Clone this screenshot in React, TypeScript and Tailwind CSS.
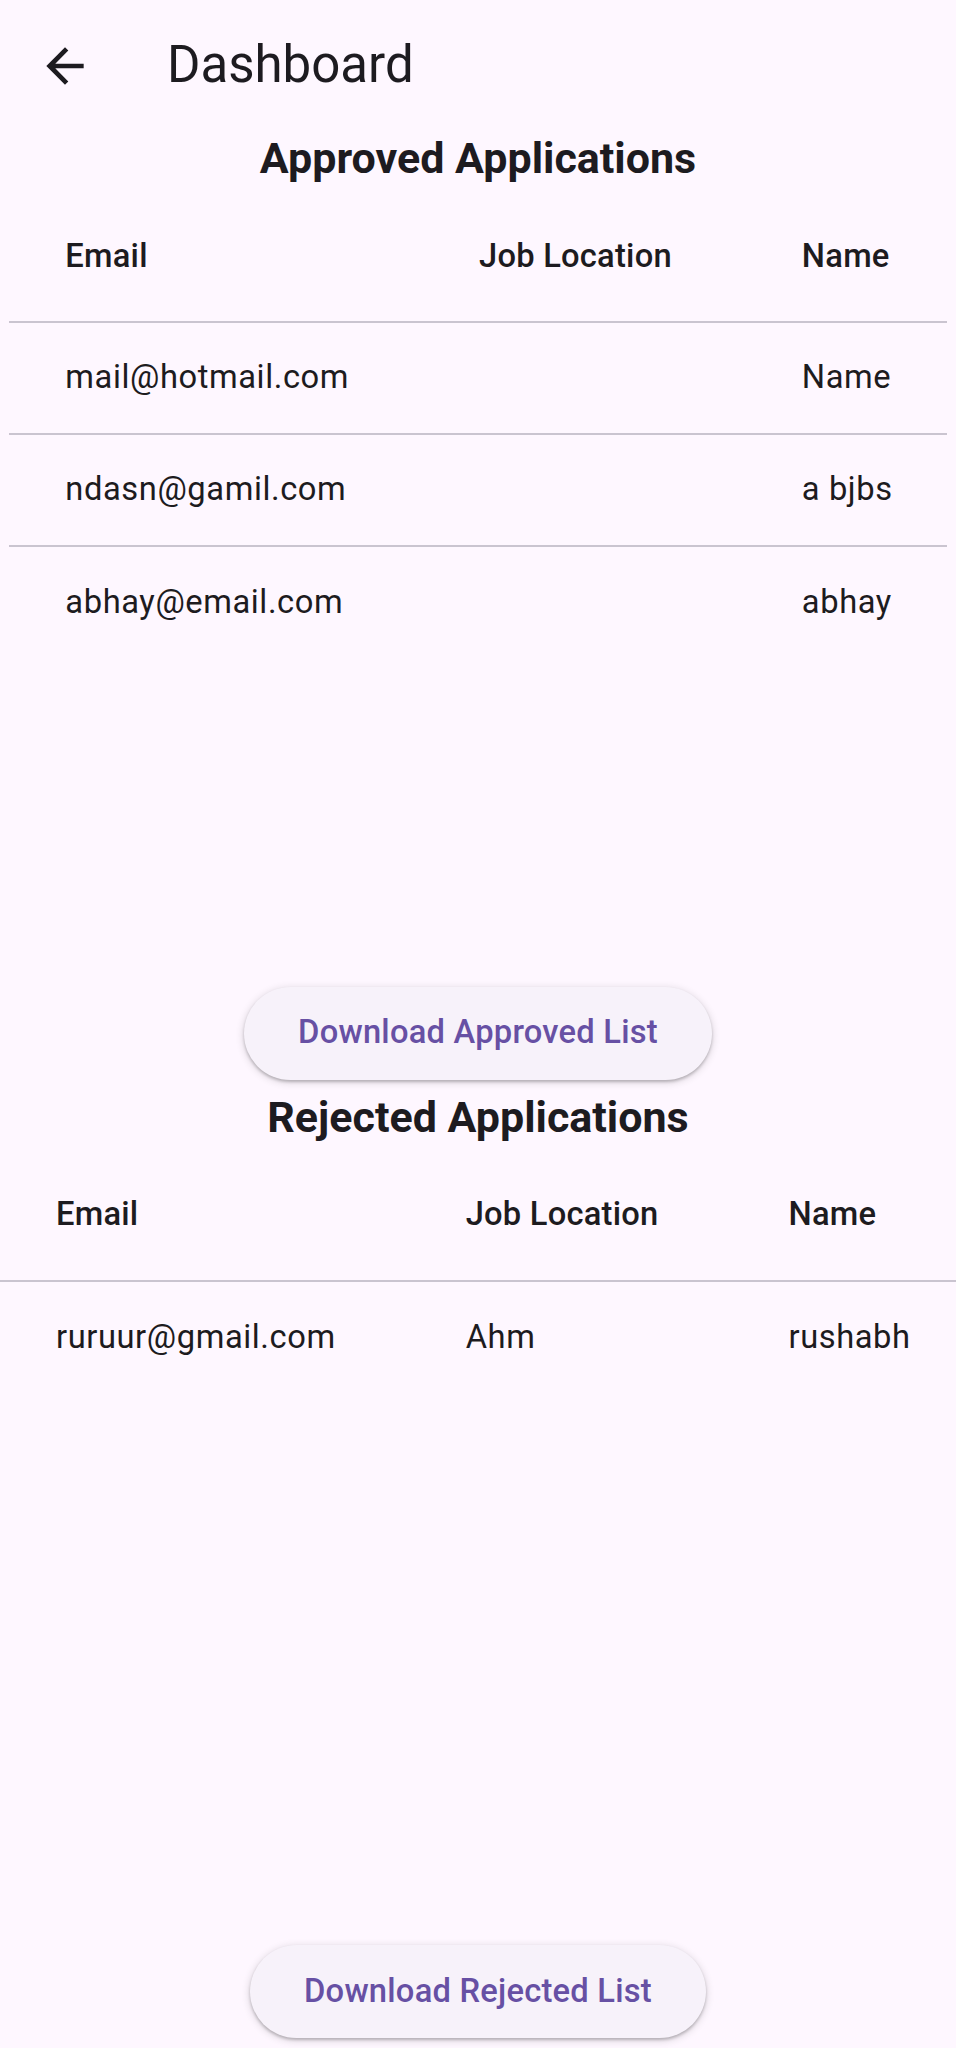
import React from 'react';

type Row = { email: string; location: string; name: string };

const approved: Row[] = [
  { email: 'mail@hotmail.com', location: '', name: 'Name' },
  { email: 'ndasn@gamil.com', location: '', name: 'a bjbs' },
  { email: 'abhay@email.com', location: '', name: 'abhay' },
];

const rejected: Row[] = [{ email: 'ruruur@gmail.com', location: 'Ahm', name: 'rushabh' }];

// horizontal margin at the table edges, half the column spacing between cells
const cellPad = (i: number) => {
  if (i === 0) return 'pl-[56px] pr-[65px]';
  if (i === 2) return 'pl-[65px] pr-[54px]';
  return 'px-[65px]';
};

const DataTable: React.FC<{ rows: Row[] }> = ({ rows }) => {
  const headers = ['Email', 'Job Location', 'Name'];

  return (
    <div className="mt-[9px] overflow-hidden">
      {/* mx-auto centers the table, and pins it to the left edge once it is wider than the screen */}
      <table className="mx-auto border-separate border-spacing-0">
        <thead>
          <tr>
            {headers.map((h, i) => (
              <th
                key={h}
                className={`h-[131px] whitespace-nowrap border-b-2 border-[#cac4d0] text-left align-middle text-[32.7px] font-medium tracking-[0.23px] ${cellPad(i)}`}
              >
                {h}
              </th>
            ))}
          </tr>
        </thead>
        <tbody>
          {rows.map((r, ri) => {
            const last = ri === rows.length - 1;
            return (
              <tr key={r.email}>
                {[r.email, r.location, r.name].map((v, i) => (
                  <td
                    key={i}
                    className={`h-[112px] whitespace-nowrap align-middle text-[32.7px] font-normal tracking-[0.58px] ${
                      last ? '' : 'border-b-2 border-[#cac4d0]'
                    } ${cellPad(i)}`}
                  >
                    {v}
                  </td>
                ))}
              </tr>
            );
          })}
        </tbody>
      </table>
    </div>
  );
};

const Section: React.FC<{ title: string; rows: Row[]; button: string }> = ({ title, rows, button }) => (
  <section className="flex min-h-0 flex-1 basis-0 flex-col">
    <h2 className="mt-[3px] text-center text-[43px] font-bold leading-[49px]">{title}</h2>

    <DataTable rows={rows} />

    <button className="mb-[10px] mt-auto h-[93px] self-center rounded-full bg-[#f7f2fa] px-[54px] text-[32.7px] font-medium tracking-[0.23px] text-[#6750a4] shadow-[0_2px_3px_rgba(0,0,0,0.22),0_2px_7px_2px_rgba(0,0,0,0.1)]">
      {button}
    </button>
  </section>
);

export default function App() {
  return (
    <div
      className="flex h-[2048px] flex-col overflow-hidden bg-[#fef7ff] text-[#1d1b20]"
      style={{ fontFamily: 'Roboto, "Noto Sans", sans-serif' }}
    >
      {/* App bar */}
      <header className="flex h-[131px] shrink-0 items-center">
        <button className="ml-[37px] flex h-[56px] w-[56px] items-center justify-center">
          <svg viewBox="0 0 24 24" className="h-[56px] w-[56px]" fill="#1d1b20">
            <path d="M20 11H7.83l5.59-5.59L12 4l-8 8 8 8 1.41-1.41L7.83 13H20v-2z" />
          </svg>
        </button>
        <h1 className="ml-[74px] text-[51px] font-normal leading-normal">Dashboard</h1>
      </header>

      <Section title="Approved Applications" rows={approved} button="Download Approved List" />
      <Section title="Rejected Applications" rows={rejected} button="Download Rejected List" />
    </div>
  );
}
